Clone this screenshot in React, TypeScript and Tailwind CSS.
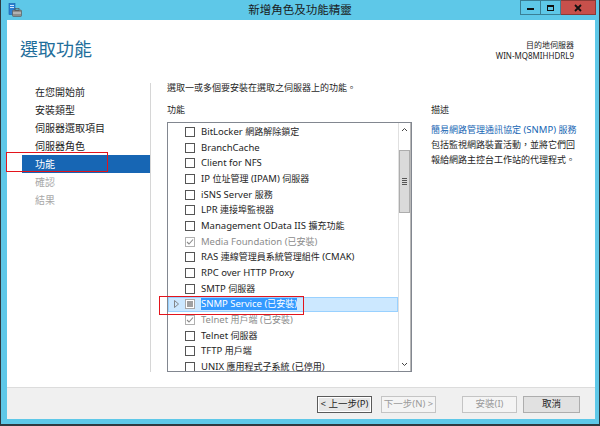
import React from "react";

const FONT = '"Noto Sans", "Noto Sans CJK TC", sans-serif';

// Renders CJK runs a bit smaller than Latin runs (as in the reference)
function M({ s, cjk = "text-[9px]" }: { s: string; cjk?: string }) {
  const parts = s.split(/([\u3000-\u9fff\uff00-\uffef]+)/);
  return (
    <>
      {parts.map((p, i) =>
        /[\u3000-\u9fff\uff00-\uffef]/.test(p) ? (
          <span key={i} className={cjk}>
            {p}
          </span>
        ) : (
          <span key={i}>{p}</span>
        )
      )}
    </>
  );
}

type State = "none" | "checkedDisabled" | "snmp";
const items: { t: string; s: State }[] = [
  { t: "BitLocker 網路解除鎖定", s: "none" },
  { t: "BranchCache", s: "none" },
  { t: "Client for NFS", s: "none" },
  { t: "IP 位址管理 (IPAM) 伺服器", s: "none" },
  { t: "iSNS Server 服務", s: "none" },
  { t: "LPR 連接埠監視器", s: "none" },
  { t: "Management OData IIS 擴充功能", s: "none" },
  { t: "Media Foundation (已安裝)", s: "checkedDisabled" },
  { t: "RAS 連線管理員系統管理組件 (CMAK)", s: "none" },
  { t: "RPC over HTTP Proxy", s: "none" },
  { t: "SMTP 伺服器", s: "none" },
  { t: "SNMP Service (已安裝)", s: "snmp" },
  { t: "Telnet 用戶端 (已安裝)", s: "checkedDisabled" },
  { t: "Telnet 伺服器", s: "none" },
  { t: "TFTP 用戶端", s: "none" },
  { t: "UNIX 應用程式子系統 (已停用)", s: "none" },
];

function Check({ s }: { s: State }) {
  if (s === "checkedDisabled") {
    return (
      <div className="w-[10px] h-[10px] shrink-0 border border-[#b0b0b0] bg-white flex items-center justify-center">
        <svg width="8" height="8" viewBox="0 0 8 8">
          <path d="M1 4 L3 6 L7 1.5" fill="none" stroke="#8a8a8a" strokeWidth="1.1" />
        </svg>
      </div>
    );
  }
  if (s === "snmp") {
    return (
      <div className="w-[10px] h-[10px] shrink-0 border border-[#a8a8a8] bg-white flex items-center justify-center">
        <div className="w-[6px] h-[6px] bg-[#a0a0a0]" />
      </div>
    );
  }
  return <div className="w-[10px] h-[10px] shrink-0 border border-[#555555] bg-white" />;
}

function Row({ t, s }: { t: string; s: State }) {
  const sel = s === "snmp";
  return (
    <div
      className={
        "h-[15.7px] flex items-center relative " +
        (sel ? "bg-[#cce8ff] outline outline-1 outline-[#99d1ff] -outline-offset-1" : "")
      }
    >
      <div className="w-[17px] shrink-0 flex items-center justify-center">
        {sel && (
          <svg width="5" height="8" viewBox="0 0 5 8">
            <path d="M0.5 0.5 L4.5 4 L0.5 7.5 Z" fill="none" stroke="#7a7a7a" strokeWidth="0.9" />
          </svg>
        )}
      </div>
      <Check s={s} />
      <div className="ml-[6px] whitespace-nowrap text-[9.5px] leading-[12px]">
        {sel ? (
          <span className="bg-[#3399ff] text-white">
            <M s={t} />
          </span>
        ) : (
          <span className={s === "checkedDisabled" ? "text-[#8c8c8c]" : "text-[#1e1e1e]"}>
            <M s={t} />
          </span>
        )}
      </div>
    </div>
  );
}

export default function App() {
  const nav = [
    { t: "在您開始前", k: "n" },
    { t: "安裝類型", k: "n" },
    { t: "伺服器選取項目", k: "n" },
    { t: "伺服器角色", k: "n" },
    { t: "功能", k: "s" },
    { t: "確認", k: "d" },
    { t: "結果", k: "d" },
  ];
  return (
    <div
      className="w-[600px] h-[426px] bg-[#5ec8e8] relative flex flex-col border-l border-r border-b-2 border-[#2f3a40] overflow-hidden"
      style={{ fontFamily: FONT }}
    >
      {/* Title bar */}
      <div className="h-[20px] shrink-0 relative">
        <div className="absolute left-[7px] top-[3px]">
          <svg width="14" height="14" viewBox="0 0 14 14">
            <rect x="1" y="0.5" width="6" height="11" fill="#2a7fd4" stroke="#1a5fa8" strokeWidth="0.6" />
            <rect x="2" y="2" width="4" height="1" fill="#cfe6fb" />
            <rect x="2" y="4" width="4" height="1" fill="#cfe6fb" />
            <rect x="4.5" y="7" width="9" height="6.5" rx="1" fill="#8c8c8c" stroke="#555" strokeWidth="0.6" />
            <rect x="7" y="5.5" width="4" height="2" fill="none" stroke="#555" strokeWidth="0.7" />
            <rect x="5" y="9.5" width="8" height="1" fill="#d8d8d8" />
          </svg>
        </div>
        <div className="absolute left-0 right-0 top-[3px] text-center text-[11.5px] leading-[14px] text-[#1a1a1a]">
          新增角色及功能精靈
        </div>
        <div className="absolute right-[3px] top-0 flex h-[15px]">
          <div className="w-[21px] h-[15px] border border-[#3a7f95] flex items-end justify-center pb-[4px]">
            <div className="w-[7px] h-[2px] bg-[#111]" />
          </div>
          <div className="w-[20px] h-[15px] border-t border-b border-r border-[#3a7f95] flex items-center justify-center">
            <div className="w-[7px] h-[6px] border-[1.5px] border-[#111] border-t-2" />
          </div>
          <div className="w-[35px] h-[15px] bg-[#c7504b] border-t border-b border-r border-[#8a3a36] flex items-center justify-center">
            <svg width="8" height="8" viewBox="0 0 8 8">
              <path d="M1 1 L7 7 M7 1 L1 7" stroke="#111" strokeWidth="1.8" />
            </svg>
          </div>
        </div>
      </div>

      {/* Client */}
      <div className="ml-[6px] mr-[4px] h-[399px] shrink-0 bg-white flex flex-col">
        {/* Header */}
        <div className="h-[60px] shrink-0 flex justify-between">
          <div className="pl-[13px] pt-[17px] text-[18px] leading-[24px] text-[#1f6e9b]">選取功能</div>
          <div className="pr-[21px] pt-[19px] text-right text-[8px] leading-[11px] text-[#1e1e1e]">
            <div>目的地伺服器</div>
            <div>WIN-MQ8MIHHDRL9</div>
          </div>
        </div>

        {/* Body */}
        <div className="h-[307px] shrink-0 flex">
          <div className="w-[144px] shrink-0 mt-[3px] h-[289px] border-r border-[#d6d6d6] flex flex-col">
            {nav.map((n) => (
              <div
                key={n.t}
                className={
                  "ml-[15px] h-[18px] pl-[13px] text-[10px] leading-[18px] " +
                  (n.k === "s"
                    ? "bg-[#1766b4] text-white"
                    : n.k === "d"
                    ? "text-[#a8a8a8]"
                    : "text-[#1e1e1e]")
                }
              >
                {n.t}
              </div>
            ))}
          </div>

          <div className="pl-[16px] shrink-0 flex flex-col">
            <div className="text-[9px] leading-[16px] text-[#1e1e1e] whitespace-nowrap">
              選取一或多個要安裝在選取之伺服器上的功能。
            </div>
            <div className="mt-[6px] text-[9px] leading-[16px] text-[#1e1e1e]">功能</div>
            <div className="mt-[4px] w-[245px] h-[250px] border border-[#828790] flex overflow-hidden">
              <div className="flex-1 pt-[1px] overflow-hidden">
                {items.map((it) => (
                  <Row key={it.t} t={it.t} s={it.s} />
                ))}
              </div>
              <div className="w-[13px] shrink-0 border-l border-[#e0e0e0] bg-white flex flex-col items-stretch border-r border-r-[#b8b8b8]">
                <div className="h-[13px] flex items-center justify-center">
                  <svg width="7" height="5" viewBox="0 0 7 5">
                    <path d="M1 4 L3.5 1.5 L6 4" fill="none" stroke="#444" strokeWidth="1" />
                  </svg>
                </div>
                <div className="h-[14px]" />
                <div className="h-[63px] bg-[#dadada] border border-[#adadad] flex items-center justify-center">
                  <div className="flex flex-col gap-[1px]">
                    <div className="w-[5px] h-[1px] bg-[#555]" />
                    <div className="w-[5px] h-[1px] bg-[#555]" />
                    <div className="w-[5px] h-[1px] bg-[#555]" />
                    <div className="w-[5px] h-[1px] bg-[#555]" />
                  </div>
                </div>
                <div className="flex-1" />
                <div className="h-[13px] flex items-center justify-center">
                  <svg width="7" height="5" viewBox="0 0 7 5">
                    <path d="M1 1 L3.5 3.5 L6 1" fill="none" stroke="#444" strokeWidth="1" />
                  </svg>
                </div>
              </div>
            </div>
          </div>

          <div className="ml-[19px] pt-[22px] flex flex-col">
            <div className="text-[9px] leading-[16px] text-[#1e1e1e]">描述</div>
            <div className="mt-[4px] text-[9.5px] leading-[15px] whitespace-nowrap">
              <div className="text-[#1766b4]">
                <M s="簡易網路管理通訊協定 (SNMP) 服務" />
              </div>
              <div className="text-[#1e1e1e] text-[9px]">包括監視網路裝置活動，並將它們回</div>
              <div className="text-[#1e1e1e] text-[9px]">報給網路主控台工作站的代理程式。</div>
            </div>
          </div>
        </div>

        {/* Footer */}
        <div className="h-[32px] shrink-0 border-t border-[#dcdcdc] bg-[#f0f0f0] flex justify-end items-start pt-[8px] pr-[15px]">
          <div className="w-[55px] h-[17px] border border-[#5a5a5a] bg-[#e6e6e6] flex items-center justify-center text-[9.5px] text-[#1e1e1e] outline outline-1 outline-white -outline-offset-2">
            &lt; 上一步(P)
          </div>
          <div className="ml-[9px] w-[55px] h-[17px] border border-[#c4c4c4] bg-[#f4f4f4] flex items-center justify-center text-[9.5px] text-[#9a9a9a]">
            下一步(N) &gt;
          </div>
          <div className="ml-[26px] w-[55px] h-[17px] border border-[#c4c4c4] bg-[#f4f4f4] flex items-center justify-center text-[9.5px] text-[#9a9a9a]">
            安裝(I)
          </div>
          <div className="ml-[6px] w-[57px] h-[17px] border border-[#adadad] bg-[#e1e1e1] flex items-center justify-center text-[9.5px] text-[#1e1e1e]">
            取消
          </div>
        </div>
      </div>

      {/* annotation boxes */}
      <div className="absolute left-[5px] top-[152px] w-[102px] h-[20px] border-[1.5px] border-[#e3141c]" />
      <div className="absolute left-[158px] top-[296px] w-[145px] h-[19px] border-[1.5px] border-[#e3141c]" />
    </div>
  );
}
